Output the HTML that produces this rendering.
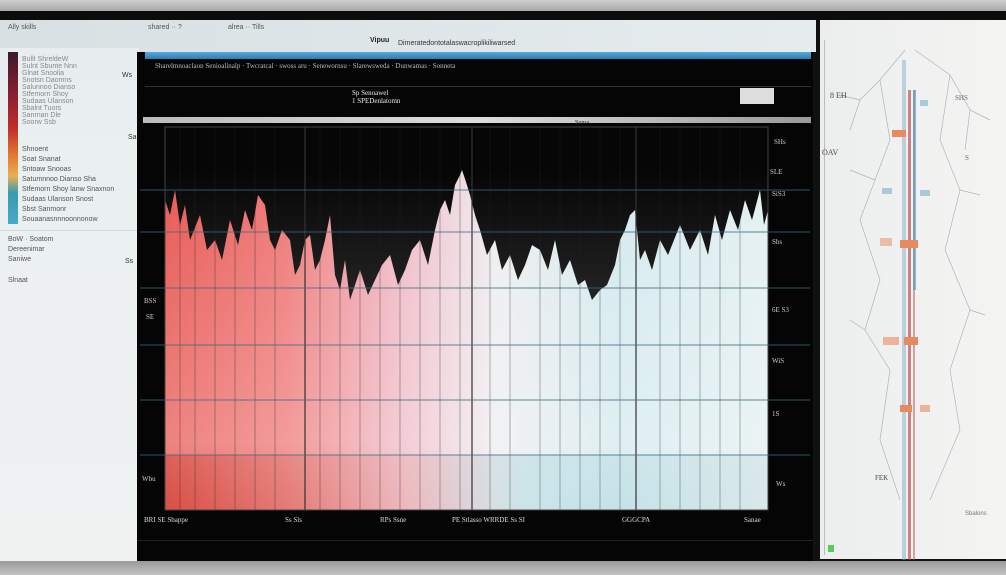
<!DOCTYPE html>
<html><head><meta charset="utf-8"><style>
*{margin:0;padding:0;box-sizing:border-box}
body{width:1006px;height:575px;overflow:hidden;background:#111;font-family:"Liberation Sans",sans-serif;position:relative}
.a{position:absolute}
.t{position:absolute;font-size:7px;color:#555;white-space:nowrap}
.w{position:absolute;font-size:7px;color:#ccc;white-space:nowrap;font-family:"Liberation Serif",serif}
</style></head><body>
<div class="a" style="left:0;top:0;width:1006px;height:11px;background:linear-gradient(#cfcfcf,#a8a8a8)"></div>
<div class="a" style="left:0;top:11px;width:1006px;height:10px;background:#0c0c0c"></div>
<div class="a" style="left:0;top:561px;width:1006px;height:14px;background:linear-gradient(#9a9a9a,#c4c4c4)"></div>
<div class="a" style="left:0;top:20px;width:816px;height:32px;background:linear-gradient(90deg,#d8e0e3,#e6ecee)"></div>
<div class="t" style="left:8px;top:24px">Ally skills</div>
<div class="t" style="left:148px;top:24px">shared ·· ?</div>
<div class="t" style="left:228px;top:24px">alrea ·· Tills</div>
<div class="t" style="left:370px;top:37px;color:#222;font-weight:bold">Vipuu</div>
<div class="t" style="left:398px;top:40px;color:#333">Dimeratedontotalaswacroplikiliwarsed</div>
<div class="a" style="left:0;top:48px;width:139px;height:513px;background:linear-gradient(#e8eef0,#f0f2f2)"></div>
<div class="a" style="left:8px;top:52px;width:10px;height:172px;background:linear-gradient(#3a1a2a,#8a2030 25%,#c0302a 45%,#e07a30 60%,#e8b050 72%,#3a9ab0 82%,#4aa8c8)"></div>
<div class="t" style="left:22px;top:56px;color:#888;line-height:7px">Bullt ShreldeW<br>Sulnt Sbunte Nnn<br>Glnat Snoolia<br>Snotsn Daomns<br>Salunnoo Dianso<br>Stfemorn Shoy<br>Sudaas Ulanson<br>Sbalnt Tuors<br>Sanrnan Dle<br>Soorw Ssb</div>
<div class="t" style="left:22px;top:145px;line-height:10px">Shnoent<br>Soat Snanat<br>Sntoaw Snooas<br>Satumnnoo Dianso Sha<br>Stfemorn Shoy lanw Snaxnon<br>Sudaas Ulanson Snost<br>Sbst Sanmonr<br>Souaanasnnnoonnonow</div>
<div class="t" style="left:122px;top:72px;color:#333">Ws</div>
<div class="t" style="left:128px;top:134px;color:#333">Sa</div>
<div class="t" style="left:8px;top:236px">BoW · Soatom</div>
<div class="t" style="left:8px;top:246px">Dereenimar</div>
<div class="t" style="left:8px;top:256px">Saniwe</div>
<div class="t" style="left:125px;top:258px;color:#333">Ss</div>
<div class="t" style="left:8px;top:277px">Slnaat</div>
<div class="a" style="left:0;top:230px;width:139px;height:1px;background:#cdd"></div>
<div class="a" style="left:137px;top:52px;width:676px;height:509px;background:#050505"></div>
<div class="a" style="left:145px;top:52px;width:666px;height:7px;background:linear-gradient(#5aa8d8,#2a80b8)"></div>
<div class="w" style="left:155px;top:62px;color:#bbb">Sharelmnoaclaon Senioalinalp · Twcratcal · swoss aru · Senewornsu · Slarewsweda · Dunwamas · Sonneta</div>
<div class="a" style="left:145px;top:86px;width:666px;height:1px;background:#333"></div>
<div class="w" style="left:352px;top:89px;color:#eee">Sp Senoawel<br>1 SPEDenlatomn</div>
<div class="a" style="left:740px;top:88px;width:34px;height:16px;background:#ddd"></div>
<div class="a" style="left:143px;top:117px;width:668px;height:6px;background:linear-gradient(90deg,#bbb,#ddd,#999)"></div>
<svg class="a" style="left:137px;top:122px" width="676" height="400" viewBox="137 122 676 400">
<defs>
<linearGradient id="h" x1="165" x2="768" gradientUnits="userSpaceOnUse">
<stop offset="0" stop-color="#e85a55"/><stop offset="0.2" stop-color="#ee7a78"/>
<stop offset="0.38" stop-color="#f0b8c4"/><stop offset="0.55" stop-color="#eeeef0"/>
<stop offset="0.75" stop-color="#d4eaee"/><stop offset="1" stop-color="#e4f0f2"/></linearGradient>
<linearGradient id="v" x1="0" y1="170" x2="0" y2="510" gradientUnits="userSpaceOnUse">
<stop offset="0" stop-color="#fff" stop-opacity="0"/><stop offset="0.8" stop-color="#fff" stop-opacity="0.25"/><stop offset="1" stop-color="#fff" stop-opacity="0"/></linearGradient>
<linearGradient id="f" x1="165" x2="768" gradientUnits="userSpaceOnUse">
<stop offset="0" stop-color="#c84030"/><stop offset="0.4" stop-color="#e8b0b0"/><stop offset="0.6" stop-color="#a8d8e0"/><stop offset="1" stop-color="#c8dce0"/></linearGradient>
</defs>
<rect x="165" y="127" width="603" height="383" fill="#060606"/>
<polygon fill="url(#h)" points="165,510 165,200 170,215 175,190 180,225 185,205 190,240 200,215 207,250 215,240 222,260 230,220 238,245 245,210 252,230 258,195 265,205 270,240 275,250 282,230 290,240 295,275 300,265 305,240 310,235 315,270 320,260 325,240 330,215 335,275 340,290 345,260 350,300 355,285 360,270 368,295 375,280 382,265 390,255 398,285 405,270 412,250 420,240 428,265 435,230 440,210 445,200 450,215 455,185 460,175 462,170 466,182 470,195 475,215 480,230 487,255 495,240 502,270 510,255 518,280 525,265 532,245 540,250 548,270 555,240 562,275 570,260 578,285 585,280 592,300 600,290 607,285 615,265 620,240 625,230 630,215 635,210 640,260 645,250 652,270 660,240 668,255 680,225 690,250 700,230 708,255 715,215 722,240 730,210 738,230 745,200 752,220 760,190 764,225 768,210 768,510"/>
<rect x="165" y="170" width="603" height="340" fill="url(#v)"/>
<rect x="165" y="455" width="603" height="55" fill="url(#f)" opacity="0.45"/>
<g stroke="#222" stroke-opacity="0.35" stroke-width="1">
<path d="M180 127V510M195 127V510M215 127V510M235 127V510M255 127V510M275 127V510M320 127V510M340 127V510M360 127V510M380 127V510M400 127V510M420 127V510M440 127V510M460 127V510M490 127V510M510 127V510M540 127V510M560 127V510M580 127V510M600 127V510M620 127V510M660 127V510M680 127V510M700 127V510M720 127V510M740 127V510"/></g>
<g stroke="#333" stroke-width="1.2"><path d="M305 127V510M472 127V510M636 127V510"/></g>
<g stroke="#3a6a80" stroke-width="1" opacity="0.8"><path d="M140 190H810M140 232H810M140 288H810M140 345H810M140 400H810M140 455H810"/></g>
<rect x="165" y="127" width="603" height="383" fill="none" stroke="#444"/>
</svg>
<div class="w" style="left:575px;top:120px;color:#222;font-size:6px">Sunsa</div>
<div class="w" style="left:774px;top:138px">SHs</div>
<div class="w" style="left:770px;top:168px">SLE</div>
<div class="w" style="left:772px;top:190px">SiS3</div>
<div class="w" style="left:772px;top:238px">Sbs</div>
<div class="w" style="left:772px;top:306px">6E S3</div>
<div class="w" style="left:772px;top:357px">WiS</div>
<div class="w" style="left:772px;top:410px">1S</div>
<div class="w" style="left:776px;top:480px">Ws</div>
<div class="w" style="left:144px;top:297px">BSS</div>
<div class="w" style="left:146px;top:313px">SE</div>
<div class="w" style="left:142px;top:475px">Wbu</div>
<div class="w" style="left:144px;top:516px;color:#ddd">BRI SE Sbappe</div>
<div class="w" style="left:285px;top:516px;color:#ddd">Ss Sls</div>
<div class="w" style="left:380px;top:516px;color:#ddd">RPs Ssne</div>
<div class="w" style="left:452px;top:516px;color:#ddd">PE Stlasso WRRDE Ss SI</div>
<div class="w" style="left:622px;top:516px;color:#ddd">GGGCPA</div>
<div class="w" style="left:744px;top:516px;color:#ddd">Sanae</div>
<div class="a" style="left:137px;top:540px;width:676px;height:1px;background:#222"></div>
<div class="a" style="left:820px;top:20px;width:186px;height:539px;background:linear-gradient(90deg,#eceeee,#f4f4f2)"></div>
<div class="a" style="left:824px;top:40px;width:1px;height:515px;background:#bbb"></div>
<svg class="a" style="left:820px;top:20px" width="186" height="540">
<g stroke="#889" stroke-width="0.7" fill="none" opacity="0.6">
<path d="M85 30L60 60L40 80L30 110M95 30L130 55L150 90L145 130M60 60L70 120L55 160L40 200L60 260L45 310L70 350L60 420L80 480M130 55L120 120L140 170L125 230L150 290L130 350L140 410L110 480M40 80L20 75M150 90L170 100M55 160L30 150M140 170L160 175M45 310L30 300M150 290L165 295"/></g>
<rect x="82" y="40" width="4" height="520" fill="#7aa6c0" opacity="0.45"/>
<rect x="88" y="70" width="3" height="480" fill="#b83a3a" opacity="0.6"/>
<rect x="93" y="70" width="2" height="480" fill="#b85050" opacity="0.5"/>
<rect x="93" y="70" width="3" height="200" fill="#5aa0c0" opacity="0.7"/>
<g fill="#e88a60"><rect x="72" y="110" width="14" height="7"/><rect x="60" y="218" width="12" height="8" opacity="0.5"/><rect x="80" y="220" width="18" height="8"/><rect x="63" y="317" width="16" height="8" opacity="0.6"/><rect x="84" y="317" width="14" height="8"/><rect x="80" y="385" width="12" height="7"/><rect x="100" y="385" width="10" height="7" opacity="0.6"/></g>
<g fill="#7ab0c8" opacity="0.6"><rect x="100" y="80" width="8" height="6"/><rect x="62" y="168" width="10" height="6"/><rect x="100" y="170" width="10" height="6"/></g>
<text x="10" y="78" font-size="8" fill="#444" font-family="Liberation Serif">8 EH</text>
<text x="2" y="135" font-size="8" fill="#444" font-family="Liberation Serif">OAV</text>
<text x="135" y="80" font-size="7" fill="#666" font-family="Liberation Serif">SHS</text>
<text x="145" y="140" font-size="7" fill="#666" font-family="Liberation Serif">S</text>
<text x="55" y="460" font-size="7" fill="#444" font-family="Liberation Serif">FEK</text>
<text x="145" y="495" font-size="6" fill="#777" font-family="Liberation Sans">Sbalons</text>
<rect x="8" y="525" width="6" height="7" fill="#5c5"/>
</svg>
</body></html>
